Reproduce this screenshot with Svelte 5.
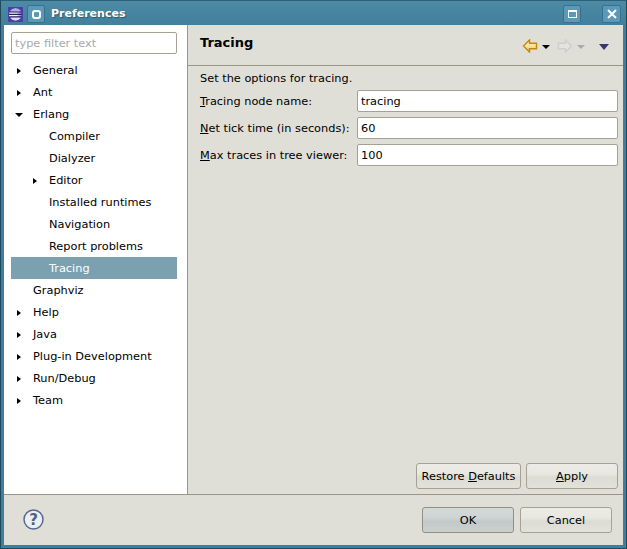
<script>
    const tree = [
        { label: "General", level: 0, arrow: "right" },
        { label: "Ant", level: 0, arrow: "right" },
        { label: "Erlang", level: 0, arrow: "down" },
        { label: "Compiler", level: 1 },
        { label: "Dialyzer", level: 1 },
        { label: "Editor", level: 1, arrow: "right" },
        { label: "Installed runtimes", level: 1 },
        { label: "Navigation", level: 1 },
        { label: "Report problems", level: 1 },
        { label: "Tracing", level: 1, selected: true },
        { label: "Graphviz", level: 0 },
        { label: "Help", level: 0, arrow: "right" },
        { label: "Java", level: 0, arrow: "right" },
        { label: "Plug-in Development", level: 0, arrow: "right" },
        { label: "Run/Debug", level: 0, arrow: "right" },
        { label: "Team", level: 0, arrow: "right" },
    ];

    const fields = [
        { key: "T", rest: "racing node name:", value: "tracing" },
        { key: "N", rest: "et tick time (in seconds):", value: "60" },
        { key: "M", rest: "ax traces in tree viewer:", value: "100" },
    ];
</script>

<div class="window">
    <div class="titlebar">
        <div class="app-icon">
            <svg width="15" height="15" viewBox="0 0 15 15">
                <defs>
                    <linearGradient id="stripe" x1="0" x2="1" y1="0" y2="0">
                        <stop offset="0" stop-color="#fff" />
                        <stop offset="0.6" stop-color="#f0f0ff" />
                        <stop offset="1" stop-color="#6a64b8" />
                    </linearGradient>
                </defs>
                <rect width="15" height="15" rx="1" fill="#4a3fa6" />
                <circle cx="7.5" cy="7.5" r="6.5" fill="#241c66" />
                <path d="M2.3 3.6A6.5 6.5 0 0 1 12.7 3.6L12.7 4.6H2.3Z" fill="#b4aee8" />
                <path d="M1.2 5.6h12.6v1.2H1.2zM1 8h13v1.2H1z" fill="url(#stripe)" />
                <path d="M2.4 11.2A6.5 6.5 0 0 0 12.6 11.2L12.6 10.4H2.4Z" fill="#dcdcf4" />
            </svg>
        </div>
        <div class="win-btn menu-btn">
            <span class="ring"></span>
        </div>
        <div class="title">Preferences</div>
        <div class="win-btn max-btn">
            <span class="square"></span>
        </div>
        <div class="win-btn close-btn">
            <svg width="10" height="10" viewBox="0 0 10 10">
                <path d="M1 1l8 8M9 1l-8 8" stroke="#fff" stroke-width="2" />
            </svg>
        </div>
    </div>

    <div class="body">
        <div class="main">
            <div class="sidebar">
                <input class="filter" placeholder="type filter text" />
                <div class="tree">
                    {#each tree as item}
                        <div class="row" class:selected={item.selected} class:nested={item.level === 1}>
                            <span class="twisty">
                                {#if item.arrow === "right"}
                                    <span class="arrow-right"></span>
                                {:else if item.arrow === "down"}
                                    <span class="arrow-down"></span>
                                {/if}
                            </span>
                            {item.label}
                        </div>
                    {/each}
                </div>
            </div>

            <div class="page">
                <div class="page-head">
                    <div class="page-title">Tracing</div>
                    <div class="nav">
                        <svg width="16" height="14" viewBox="0 0 16 14">
                            <defs>
                                <linearGradient id="back" x1="0" x2="0" y1="0" y2="1">
                                    <stop offset="0" stop-color="#fffbe6" />
                                    <stop offset="1" stop-color="#f6c85c" />
                                </linearGradient>
                            </defs>
                            <path d="M7.5 1 1.5 7l6 6V9.7h7V4.3h-7z" fill="url(#back)" stroke="#c5850f" stroke-width="1.4" />
                        </svg>
                        <span class="caret black"></span>
                        <svg class="second" width="16" height="14" viewBox="0 0 16 14">
                            <path d="M8.5 1 14.5 7l-6 6V9.7h-7V4.3h7z" fill="#e4e4de" stroke="#cfcfc9" stroke-width="1.4" />
                        </svg>
                        <span class="caret grey"></span>
                        <span class="caret wide"></span>
                    </div>
                </div>
                <div class="page-body">
                    <div class="description">Set the options for tracing.</div>
                    <div class="form">
                        {#each fields as field}
                            <label class="field-label" for={field.key}><u>{field.key}</u>{field.rest}</label>
                            <input id={field.key} class="field" value={field.value} />
                        {/each}
                    </div>
                    <div class="page-buttons">
                        <button class="btn restore">Restore <u>D</u>efaults</button>
                        <button class="btn apply"><u>A</u>pply</button>
                    </div>
                </div>
            </div>
        </div>

        <div class="footer">
            <svg class="help" width="21" height="21" viewBox="0 0 21 21">
                <circle cx="10.5" cy="10.5" r="9.5" fill="#eceef2" stroke="#566a8e" stroke-width="1.5" />
                <text x="10.5" y="16" text-anchor="middle" class="help-mark">?</text>
            </svg>
            <div class="footer-buttons">
                <button class="btn ok">OK</button>
                <button class="btn cancel">Cancel</button>
            </div>
        </div>
    </div>
</div>

<style>
    :global(body) {
        background: #1f4a5e;
    }
    .window {
        width: 627px;
        height: 549px;
        display: flex;
        flex-direction: column;
        box-sizing: border-box;
        background: #3f7f9c;
        border: 1px solid #1f4a5e;
        border-top-color: #2b6079;
        font-family: "DejaVu Sans", sans-serif;
        font-size: 11.33px;
        color: #000;
    }
    .titlebar {
        height: 24px;
        display: flex;
        align-items: center;
        padding: 0 5px 0 7px;
        background: linear-gradient(#4d8aa5, #427f9b);
    }
    .app-icon {
        width: 15px;
        height: 15px;
        margin-top: 3px;
        display: flex;
    }
    .win-btn {
        width: 18px;
        height: 18px;
        box-sizing: border-box;
        border: 1px solid #39718b;
        border-radius: 2px;
        background: #5a9ab8;
        display: flex;
        align-items: center;
        justify-content: center;
        margin-top: 2px;
    }
    .menu-btn {
        margin-left: 4px;
    }
    .ring {
        width: 5px;
        height: 5px;
        border: 2px solid #fff;
        border-radius: 3px;
    }
    .title {
        flex: 1;
        margin-left: 6px;
        color: #fff;
        font-size: 11px;
        font-weight: bold;
        text-shadow: 1px 1px 1px #2d5b70;
    }
    .max-btn {
        margin-right: 21px;
    }
    .close-btn {
        width: 19px;
    }
    .square {
        width: 7px;
        height: 5px;
        border: 1px solid #fff;
        border-top-width: 2px;
    }
    .body {
        flex: 1;
        margin: 0 3px 3px;
        display: flex;
        flex-direction: column;
        background: #dfdfd8;
        min-height: 0;
    }
    .main {
        flex: 1;
        display: flex;
        min-height: 0;
        border-bottom: 1px solid #9a9789;
    }
    .sidebar {
        width: 184px;
        flex: none;
        box-sizing: border-box;
        background: #fff;
        border-right: 1px solid #9a9789;
        padding: 7px 10px 0 7px;
    }
    .filter {
        display: block;
        width: 166px;
        height: 22px;
        box-sizing: border-box;
        border: 1px solid #a5a293;
        border-radius: 2px;
        padding: 0 3px;
        font: inherit;
        background: #fff;
        outline: none;
    }
    .filter::placeholder {
        color: #a9a9a9;
        opacity: 1;
    }
    .tree {
        margin-top: 5px;
    }
    .row {
        height: 22px;
        display: flex;
        align-items: center;
        white-space: nowrap;
        padding-left: 5px;
    }
    .row.nested {
        padding-left: 21px;
    }
    .row.selected {
        background: #7ba1b0;
        color: #fff;
    }
    .twisty {
        width: 17px;
        flex: none;
        display: flex;
        align-items: center;
        height: 100%;
    }
    .arrow-right {
        width: 0;
        height: 0;
        margin-top: 2px;
        margin-left: 1px;
        border-left: 4px solid #000;
        border-top: 3.5px solid transparent;
        border-bottom: 3.5px solid transparent;
    }
    .arrow-down {
        width: 0;
        height: 0;
        margin-top: 2px;
        margin-left: -1px;
        border-top: 4px solid #000;
        border-left: 4px solid transparent;
        border-right: 4px solid transparent;
    }
    .page {
        flex: 1;
        display: flex;
        flex-direction: column;
        min-width: 0;
    }
    .page-head {
        height: 41px;
        flex: none;
        box-sizing: border-box;
        border-bottom: 1px solid #9a9789;
        display: flex;
        align-items: flex-start;
        padding: 10px 14px 0 12px;
    }
    .page-title {
        flex: 1;
        font-size: 13px;
        font-weight: bold;
    }
    .nav {
        display: flex;
        align-items: center;
        height: 14px;
        margin-top: 4px;
    }
    .caret {
        width: 0;
        height: 0;
        margin-top: 1px;
        margin-left: 4px;
        border-top: 4px solid #000;
        border-left: 4px solid transparent;
        border-right: 4px solid transparent;
    }
    .caret.grey {
        border-top-color: #aaa;
    }
    .caret.wide {
        margin-left: 14px;
        border-top: 6px solid #3b356e;
        border-left-width: 5px;
        border-right-width: 5px;
    }
    .second {
        margin-left: 7px;
    }
    .page-body {
        flex: 1;
        display: flex;
        flex-direction: column;
        padding: 6px 5px 5px 12px;
        min-height: 0;
    }
    .description {
        line-height: 13px;
    }
    .form {
        display: grid;
        grid-template-columns: 157px 1fr;
        grid-auto-rows: 22px;
        row-gap: 5px;
        margin-top: 5px;
        align-items: center;
    }
    .field {
        height: 22px;
        box-sizing: border-box;
        border: 1px solid #a5a293;
        border-radius: 2px;
        padding: 0 3px;
        font: inherit;
        width: 100%;
        background: #fff;
        outline: none;
    }
    .page-buttons {
        margin-top: auto;
        display: flex;
        justify-content: flex-end;
        gap: 5px;
    }
    .btn {
        height: 26px;
        box-sizing: border-box;
        border: 1px solid #a5a293;
        border-radius: 3px;
        font: inherit;
        color: #000;
        padding: 0;
        background: linear-gradient(#ecebe5 0, #e8e7e0 40%, #dcdcd4 55%, #e2e2da 100%);
    }
    .restore {
        width: 105px;
    }
    .apply {
        width: 92px;
    }
    .footer {
        height: 50px;
        flex: none;
        display: flex;
        align-items: center;
        padding: 0 11px 0 19px;
    }
    .help {
        margin-top: -2px;
    }
    .help-mark {
        font-family: "DejaVu Sans", sans-serif;
        font-size: 15px;
        font-weight: bold;
        fill: #4f6285;
    }
    .footer-buttons {
        margin-left: auto;
        display: flex;
        gap: 6px;
        margin-top: -1px;
    }
    .ok,
    .cancel {
        width: 92px;
    }
    .ok {
        background: linear-gradient(#d4dad9 0, #cfd5d4 40%, #c2c9c8 55%, #ccd1d0 100%);
        border-color: #8f8f82;
    }
</style>
